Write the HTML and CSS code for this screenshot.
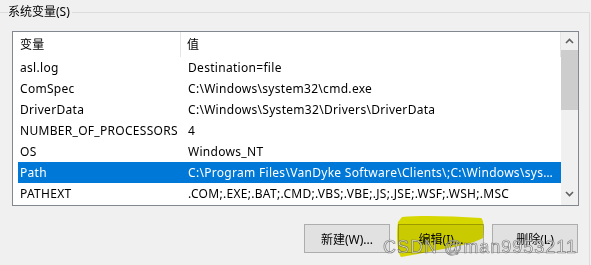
FILE: index.html
```html
<!DOCTYPE html>
<html lang="zh-CN">
<head>
  <meta charset="UTF-8">
  <title>系统变量</title>
  <link rel="stylesheet" href="styles.css">
</head>
<body>
  <div class="group">
    <div class="group-head"><span class="caption">系统变量(S)</span></div>
    <div class="group-body">
      <!-- variable list -->
      <div class="listview">
        <div class="table">
          <div class="row head">
            <div class="cell name">变量</div>
            <div class="cell value">值</div>
          </div>
          <div class="row"><div class="cell name">asl.log</div><div class="cell value">Destination=file</div></div>
          <div class="row"><div class="cell name">ComSpec</div><div class="cell value">C:\Windows\system32\cmd.exe</div></div>
          <div class="row"><div class="cell name">DriverData</div><div class="cell value">C:\Windows\System32\Drivers\DriverData</div></div>
          <div class="row"><div class="cell name">NUMBER_OF_PROCESSORS</div><div class="cell value">4</div></div>
          <div class="row"><div class="cell name">OS</div><div class="cell value">Windows_NT</div></div>
          <div class="row selected"><div class="cell name">Path</div><div class="cell value">C:\Program Files\VanDyke Software\Clients\;C:\Windows\system32;C:\Windows;C:\Windows\System32\Wbem</div></div>
          <div class="row"><div class="cell name">PATHEXT</div><div class="cell value">.COM;.EXE;.BAT;.CMD;.VBS;.VBE;.JS;.JSE;.WSF;.WSH;.MSC</div></div>
        </div>
        <div class="scrollbar">
          <div class="arrow up"><svg width="9" height="6" viewBox="0 0 9 6"><path d="M1 5 L4.5 1.5 L8 5" fill="none" stroke="#606060" stroke-width="1.6"/></svg></div>
          <div class="thumb"></div>
          <div class="track"></div>
          <div class="arrow down"><svg width="9" height="6" viewBox="0 0 9 6"><path d="M1 1 L4.5 4.5 L8 1" fill="none" stroke="#606060" stroke-width="1.6"/></svg></div>
        </div>
      </div>

      <div class="buttons">
        <button>新建(W)...</button>
        <button>编辑(I)...</button>
        <button>删除(L)</button>
      </div>
    </div>
  </div>

  <!-- highlighter mark and watermark over the screenshot -->
  <svg class="marker" width="100" height="45" viewBox="0 0 100 45">
    <path d="M11 3 C30 1 60 2 90 4 C93 6 93 14 92 24 C82 30 62 33 42 37 C27 40 16 42 10 43 C6 38 5 20 7 8 Z" fill="#e5e500"/>
  </svg>
  <div class="watermark">CSDN @man9953211</div>
</body>
</html>
```

FILE: styles.css
```css
body {
  margin: 0;
  width: 591px;
  height: 265px;
  background: #f0f0f0;
  font-family: "Noto Sans", "Noto Sans CJK SC", sans-serif;
  font-size: 12px;
  color: #000;
  overflow: hidden;
  position: relative;
}
.group {
  width: 590px;
}
.group-head {
  height: 24px;
  display: flex;
  align-items: center;
}
.group-head::before {
  content: "";
  width: 8px;
  align-self: flex-end;
  height: 12px;
  border-top: 1px solid #dcdcdc;
  box-sizing: border-box;
}
.group-head::after {
  content: "";
  flex: 1;
  align-self: flex-end;
  height: 12px;
  margin-left: 2px;
  border-top: 1px solid #dcdcdc;
  border-right: 1px solid #dcdcdc;
  box-sizing: border-box;
}
.caption {
  line-height: 24px;
}
.group-body {
  height: 241px;
  box-sizing: border-box;
  border-right: 1px solid #dcdcdc;
  padding: 7px 10px 0 12px;
}
.listview {
  height: 175px;
  box-sizing: border-box;
  border: 1px solid #828790;
  background: #fff;
  display: flex;
}
.table {
  flex: 1;
  min-width: 0;
  padding-left: 5px;
}
.row {
  display: flex;
  height: 21px;
  align-items: center;
}
.row.head {
  height: 25px;
}
.cell {
  white-space: nowrap;
  overflow: hidden;
  text-overflow: ellipsis;
  letter-spacing: 0.3px;
}
.name {
  width: 163px;
  flex: none;
  padding-left: 2px;
  box-sizing: border-box;
}
.value {
  flex: 1;
  padding-left: 7px;
  padding-right: 6px;
}
.head .name {
  height: 25px;
  line-height: 25px;
  border-right: 1px solid #e5e5e5;
  box-sizing: border-box;
}
.head .value {
  padding-left: 6px;
  height: 25px;
  line-height: 25px;
  border-right: 1px solid #e5e5e5;
}
.selected {
  background: #0078d7;
  color: #fff;
}
.scrollbar {
  width: 17px;
  flex: none;
  background: #f0f0f0;
  display: flex;
  flex-direction: column;
}
.arrow {
  height: 18px;
  display: flex;
  align-items: center;
  justify-content: center;
}
.arrow.down {
  height: 14px;
  align-items: flex-start;
}
.thumb {
  height: 60px;
  background: #cdcdcd;
}
.track {
  flex: 1;
}
.buttons {
  display: flex;
  justify-content: flex-end;
  gap: 8px;
  margin-top: 18px;
  padding-right: 1px;
}
button {
  width: 86px;
  height: 29px;
  background: #e1e1e1;
  border: 1px solid #adadad;
  border-radius: 0;
  font-family: "Noto Sans", "Noto Sans CJK SC", sans-serif;
  font-size: 12px;
  color: #000;
  padding: 0;
}
.marker {
  position: absolute;
  left: 391px;
  top: 214px;
  mix-blend-mode: multiply;
}
.watermark {
  position: absolute;
  left: 383px;
  top: 237px;
  font-family: "Liberation Sans", Arial, sans-serif;
  font-size: 18px;
  letter-spacing: 1px;
  color: rgba(255, 255, 255, 0.6);
  -webkit-text-stroke: 0.7px rgba(100, 100, 100, 0.8);
}
```
